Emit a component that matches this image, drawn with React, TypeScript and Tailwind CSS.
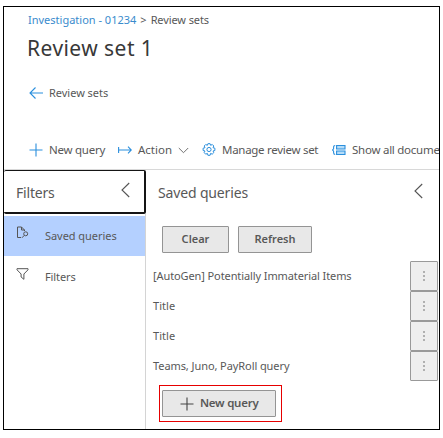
import React from "react";

const queries = [
  { name: "[AutoGen] Potentially Immaterial Items", cls: "tracking-[-0.1px]" },
  { name: "Title", cls: "tracking-[0.05px]" },
  { name: "Title", cls: "tracking-[0.05px]" },
  { name: "Teams, Juno, PayRoll query", cls: "tracking-[-0.08px]" },
];

function Chevron() {
  return (
    <svg width="9" height="16" viewBox="0 0 9 16" fill="none" stroke="#555" strokeWidth="1.1">
      <path d="M8.2 1 1 8l7.200 7" />
    </svg>
  );
}

function Plus({ color, size }: { color: string; size: number }) {
  return (
    <svg className="shrink-0" width={size} height={size} viewBox="0 0 14 14" fill="none" stroke={color} strokeWidth="1.1">
      <path d="M7 .5v13M.5 7h13" />
    </svg>
  );
}

function Gear() {
  return (
    <svg width="14" height="14" viewBox="0 0 14 14" fill="none" stroke="#2b8fdd" strokeWidth="1" strokeLinejoin="round">
      <path d="M5.900.7h2.200l.5 1.600 1.700-.8 1.500 1.500-.8 1.700 1.900.5v2.300l-1.900.5.8 1.600-1.600 1.600-1.600-.8-.5 1.900H5.900l-.5-1.900-1.700.8-1.500-1.600.8-1.600-1.900-.5V5.200L3 4.700 2.200 3l1.500-1.500 1.700.8z" />
      <circle cx="7" cy="6.500" r="2.100" />
    </svg>
  );
}

export default function App() {
  return (
    <div className="h-[438px] w-[443px] overflow-hidden bg-white pl-[3px] pt-[6px] font-['Noto_Sans','Open_Sans',sans-serif] text-[#585858]">
      <div className="flex h-[424px] w-[437px] flex-col overflow-hidden border border-black whitespace-nowrap">
        <header className="h-[120px] shrink-0 pl-6">
          <nav className="flex h-[25px] items-center gap-[4px] text-[11px] leading-4">
            <a className="text-[#3a8bcd]">Investigation - 01234</a>
            <span>&gt;</span>
            <span className="tracking-[-0.1px]">Review sets</span>
          </nav>
          <h1 className="mt-[1px] -ml-px text-[21px] leading-[30px] tracking-[0.45px] text-[#383838]">Review set 1</h1>
          <div className="mt-[20px] flex h-5 items-center gap-[6px] pl-px text-[11px]">
            <svg width="14" height="12" viewBox="0 0 14 12" fill="none" stroke="#2b8fdd" strokeWidth="1.1">
              <path d="M14 6H.8M6.500.5 1 6l5.500 5.500" />
            </svg>
            <span className="tracking-[-0.02px]">Review sets</span>
          </div>
        </header>

        <div className="flex h-[43px] shrink-0 items-center border-b border-[#d8d8d8] pt-[4px] pl-[25px] text-[11.500px]">
          <Plus color="#2b8fdd" size={14} />
          <span className="ml-[6px] w-[56px] shrink-0 tracking-[-0.25px]">New query</span>
          <svg className="ml-[13px] shrink-0" width="14" height="8" viewBox="0 0 14 8" fill="none" stroke="#2b8fdd" strokeWidth="1.1">
            <path d="M.6 1v6M1 4h12.500M10 .7 13.300 4 10 7.300" />
          </svg>
          <span className="ml-[6px] w-[34px] shrink-0 tracking-[0px]">Action</span>
          <svg className="ml-[6px] shrink-0" width="11" height="7" viewBox="0 0 11 7" fill="none" stroke="#707070" strokeWidth="1">
            <path d="m.8 1 4.700 4.700L10.200 1" />
          </svg>
          <span className="ml-[13px] shrink-0"><Gear /></span>
          <span className="ml-[6px] w-[97px] shrink-0 tracking-[-0.28px]">Manage review set</span>
          <svg className="ml-[13px] shrink-0" width="14" height="12" viewBox="0 0 14 12" fill="none" stroke="#2b8fdd" strokeWidth="1.1">
            <path fill="#b5dcf8" d="M4.600 1.500h8.400v3.500H4.600zM4.600 7h8.400v3.500H4.600z" />
            <path d="M3.200 1.500Q1.600 1.500 1.600 3.200v1.600L.6 6l1 1.200v1.600q0 1.700 1.600 1.700" />
          </svg>
          <span className="ml-[6px] shrink-0 tracking-[-0.25px]">Show all docume</span>
        </div>

        <div className="flex min-h-0 flex-1">
          <aside className="flex w-[142px] shrink-0 flex-col">
            <div className="flex h-[44px] w-[142px] items-center justify-between rounded-[2px] border-2 border-t-[1.500px] border-l-0 border-[#151515] pr-[14px] pl-[12px] text-[14px]">
              <span className="mt-[2px] tracking-[-0.2px]">Filters</span>
              <span className="-mt-[3px]"><Chevron /></span>
            </div>
            <div className="flex min-h-0 flex-1 flex-col border-r border-[#d4d4d4] pt-[2px]">
              <div className="flex h-10 shrink-0 items-center bg-[#b4d0ff] pl-[12px] text-[11px]">
                <svg className="-mt-2" width="13" height="13" viewBox="0 0 13 13" fill="none" stroke="#555" strokeWidth="1">
                  <path d="M5 11.500H1.500V1h4L8.500 4v1M5.500 1v3h3M6 11.800 8.300 9.300" />
                  <circle cx="9.700" cy="7.800" r="2" />
                </svg>
                <span className="ml-[16px] tracking-[-0.05px]">Saved queries</span>
              </div>
              <div className="flex h-[42px] items-center pl-[12px] text-[11px]">
                <svg className="-mt-[6px]" width="13" height="12" viewBox="0 0 13 12" fill="none" stroke="#555" strokeWidth="1">
                  <path d="M1 .7h11v1.100L7.900 6v5.300L5.100 9V6L1 1.800z" />
                </svg>
                <span className="ml-[16px] tracking-[-0.1px]">Filters</span>
              </div>
            </div>
          </aside>

          <main className="flex min-w-0 flex-1 flex-col pl-[7px]">
            <div className="flex h-[46px] items-center justify-between pr-[16px] pl-[5px] text-[14px]">
              <span className="-mt-[2px] tracking-[-0.15px]">Saved queries</span>
              <span className="-mt-[5px]"><Chevron /></span>
            </div>
            <div className="mt-[10px] ml-[9px] flex gap-[9px] text-[11px] font-semibold">
              <button className="h-[27px] w-[67px] rounded-[1px] border border-[#949494] bg-[#e8e8e8]">Clear</button>
              <button className="h-[27px] w-[74px] rounded-[1px] border border-[#949494] bg-[#e8e8e8]">Refresh</button>
            </div>
            <ul className="mt-[8px] text-[11px]">
              {queries.map((q, i) => (
                <li key={i} className="flex h-[30px] items-center justify-between">
                  <span className={q.cls}>{q.name}</span>
                  <button className="mr-px flex h-[30px] w-[28px] flex-col items-center justify-center gap-[2px] rounded-[1px] border border-[#999] bg-[#eee]">
                    <i className="h-[2px] w-[2px] bg-[#b0b0b0]" />
                    <i className="h-[2px] w-[2px] bg-[#b0b0b0]" />
                    <i className="h-[2px] w-[2px] bg-[#b0b0b0]" />
                  </button>
                </li>
              ))}
            </ul>
            <div className="mt-[4px] ml-[6px] flex h-[37px] w-[123px] items-center border border-[#e60000] pl-[2px]">
              <button className="flex h-[27px] w-[114px] items-center rounded-[1px] border border-[#949494] bg-[#e8e8e8] pl-[17px] text-[11.500px] font-semibold">
                <Plus color="#444" size={14} />
                <span className="-mt-px ml-[6px] tracking-[-0.25px]">New query</span>
              </button>
            </div>
          </main>
        </div>
      </div>
    </div>
  );
}
